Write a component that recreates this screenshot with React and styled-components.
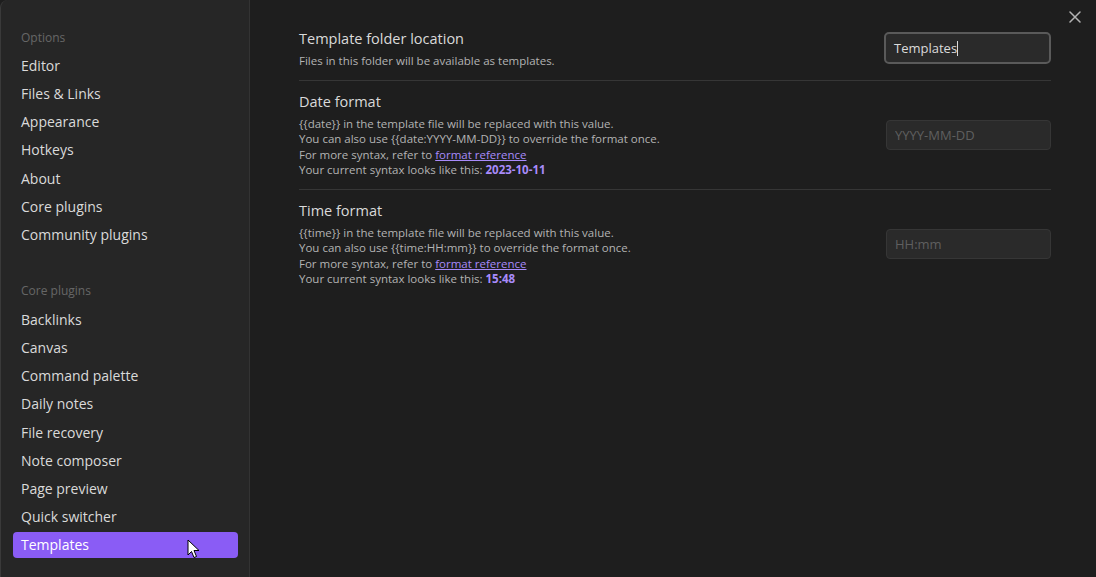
import styled, { createGlobalStyle } from "styled-components";

const GlobalStyle = createGlobalStyle`
  html, body {
    margin: 0;
    padding: 0;
    background: #1e1e1e;
  }
  body {
    font-family: "Open Sans", "Noto Sans", sans-serif;
    -webkit-font-smoothing: antialiased;
  }
`;

const optionItems = ["Editor", "Files & Links", "Appearance", "Hotkeys", "About", "Core plugins", "Community plugins"];
const pluginItems = ["Backlinks", "Canvas", "Command palette", "Daily notes", "File recovery", "Note composer", "Page preview", "Quick switcher", "Templates"];

const settings = [
    {
        name: "Template folder location",
        desc: ["Files in this folder will be available as templates."],
        value: "Templates",
        focused: true,
    },
    {
        name: "Date format",
        desc: [
            "{{date}} in the template file will be replaced with this value.",
            "You can also use {{date:YYYY-MM-DD}} to override the format once.",
        ],
        placeholder: "YYYY-MM-DD",
        sample: "2023-10-11",
    },
    {
        name: "Time format",
        desc: [
            "{{time}} in the template file will be replaced with this value.",
            "You can also use {{time:HH:mm}} to override the format once.",
        ],
        placeholder: "HH:mm",
        sample: "15:48",
    },
];

export default function App() {
    return (
        <>
            <GlobalStyle />
            <Modal>
                <SideBar>
                    <GroupTitle>Options</GroupTitle>
                    {optionItems.map((it) => (
                        <NavItem key={it}>{it}</NavItem>
                    ))}
                    <GroupTitle $spaced>Core plugins</GroupTitle>
                    {pluginItems.map((it) => (
                        <NavItem key={it} $active={it === "Templates"}>
                            {it}
                            {it === "Templates" && <Pointer />}
                        </NavItem>
                    ))}
                </SideBar>
                <Content>
                    <CloseButton aria-label="Close">
                        <svg width="12" height="12" viewBox="0 0 12 12">
                            <path d="M1 1L11 11M11 1L1 11" stroke="#b3b3b3" strokeWidth="1.5" strokeLinecap="round" />
                        </svg>
                    </CloseButton>
                    {settings.map((s, i) => (
                        <SettingRow key={s.name} $first={i === 0}>
                            <SettingInfo>
                                <SettingName>{s.name}</SettingName>
                                <SettingDesc>
                                    {s.desc.map((d) => (
                                        <div key={d}>{d}</div>
                                    ))}
                                    {s.sample && (
                                        <>
                                            <div>
                                                For more syntax, refer to <DocLink href="#">format reference</DocLink>
                                            </div>
                                            <div>
                                                Your current syntax looks like this: <Sample>{s.sample}</Sample>
                                            </div>
                                        </>
                                    )}
                                </SettingDesc>
                            </SettingInfo>
                            {s.focused ? (
                                <FocusedInput>
                                    {s.value}
                                    <Caret />
                                </FocusedInput>
                            ) : (
                                <TextInput placeholder={s.placeholder} readOnly />
                            )}
                        </SettingRow>
                    ))}
                </Content>
            </Modal>
        </>
    );
}

function Pointer() {
    return (
        <PointerWrap>
            <svg width="13" height="20" viewBox="0 0 13 20">
                <path d="M1 1L1 16L4.5 12.5L7 18.5L9.5 17.5L7 11.5L12 11.5Z" fill="#fff" stroke="#000" strokeWidth="1" strokeLinejoin="round" />
            </svg>
        </PointerWrap>
    );
}

const Modal = styled.div`
    display: flex;
    height: 577px;
    width: 1096px;
    overflow: hidden;
    background: #1e1e1e;
`;

const SideBar = styled.nav`
    width: 250px;
    flex-shrink: 0;
    box-sizing: border-box;
    background: #262626;
    border-left: 1px solid #3a3a3a;
    border-right: 1px solid #333;
    border-top-left-radius: 8px;
    padding: 28px 12px 0 12px;
    display: flex;
    flex-direction: column;
`;

const GroupTitle = styled.div`
    font-size: 12px;
    color: #666;
    padding: 0 8px;
    height: 20px;
    line-height: 20px;
    margin-top: ${(p) => (p.$spaced ? "31px" : "0")};
    margin-bottom: ${(p) => (p.$spaced ? "6px" : "5px")};
`;

const NavItem = styled.div`
    position: relative;
    font-size: 14px;
    color: ${(p) => (p.$active ? "#fff" : "#dadada")};
    background: ${(p) => (p.$active ? "#8a5cf5" : "transparent")};
    border-radius: 4px;
    height: 26px;
    line-height: 26px;
    padding: 0 8px;
    margin-bottom: 2.15px;
    width: 225px;
    box-sizing: border-box;
`;

const PointerWrap = styled.span`
    position: absolute;
    left: 174px;
    top: 7px;
    line-height: 0;
`;

const Content = styled.main`
    position: relative;
    flex: 1;
    padding: 21px 45px 0 49px;
`;

const CloseButton = styled.button`
    position: absolute;
    top: 10px;
    right: 14px;
    width: 14px;
    height: 14px;
    padding: 0;
    border: none;
    background: none;
    line-height: 0;
`;

const SettingRow = styled.div`
    display: flex;
    align-items: center;
    justify-content: space-between;
    padding: ${(p) => (p.$first ? "8px 0 11px" : "11px 0 11px")};
    border-bottom: 1px solid #363636;
    &:last-child {
        border-bottom: none;
    }
`;

const SettingInfo = styled.div`
    display: flex;
    flex-direction: column;
`;

const SettingName = styled.div`
    font-size: 14.5px;
    color: #dadada;
    line-height: 20px;
    margin-bottom: 4px;
`;

const SettingDesc = styled.div`
    font-size: 11.5px;
    color: #b3b3b3;
    line-height: 15.5px;
`;

const DocLink = styled.a`
    color: #a88bfa;
    text-decoration: underline;
`;

const Sample = styled.span`
    color: #a88bfa;
    font-weight: 700;
`;

const TextInput = styled.input`
    width: 165px;
    height: 30px;
    box-sizing: border-box;
    background: #2a2a2a;
    border: 1px solid #363636;
    border-radius: 4px;
    color: #dadada;
    font-family: inherit;
    font-size: 13px;
    padding: 0 8px;
    outline: none;
    &::placeholder {
        color: #5f5f5f;
    }
`;

const FocusedInput = styled.div`
    width: 167px;
    height: 32px;
    box-sizing: border-box;
    background: #2a2a2a;
    border: 2px solid #5a5a5a;
    border-radius: 5px;
    color: #dadada;
    font-size: 13px;
    padding: 0 8px;
    display: flex;
    align-items: center;
    margin-top: -1px;
`;

const Caret = styled.span`
    display: inline-block;
    width: 1px;
    height: 15px;
    background: #dadada;
`;
